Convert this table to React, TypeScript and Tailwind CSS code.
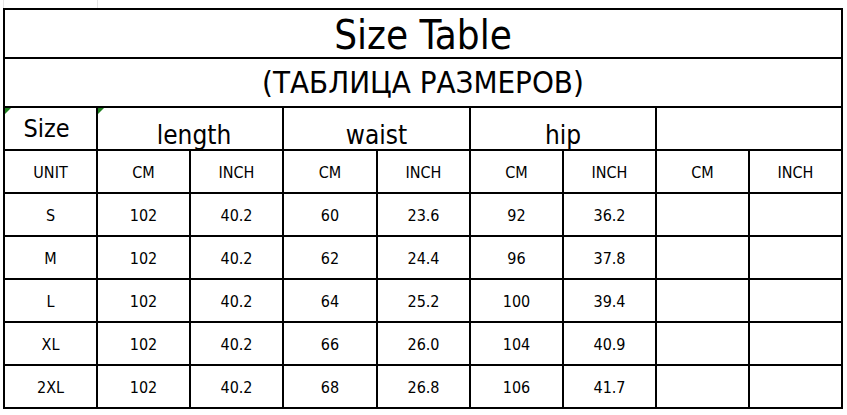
import React from "react";

const sizes = [
  ["S", "102", "40.2", "60", "23.6", "92", "36.2", "", ""],
  ["M", "102", "40.2", "62", "24.4", "96", "37.8", "", ""],
  ["L", "102", "40.2", "64", "25.2", "100", "39.4", "", ""],
  ["XL", "102", "40.2", "66", "26.0", "104", "40.9", "", ""],
  ["2XL", "102", "40.2", "68", "26.8", "106", "41.7", "", ""],
];

const units = ["UNIT", "CM", "INCH", "CM", "INCH", "CM", "INCH", "CM", "INCH"];

const cell = "border-r-2 border-b-2 border-black flex items-center justify-center";

function Flag() {
  // excel's little green corner marker
  return <div className="absolute top-0 left-0 w-0 h-0 border-t-[6px] border-t-[#1f7f1f] border-r-[6px] border-r-transparent" />;
}

export default function App() {
  return (
    <div className="w-[847px] h-[415px] bg-white text-black font-['DejaVu_Sans_Condensed','DejaVu_Sans',sans-serif] overflow-hidden">
      <div className="flex h-[8px]">
        <div className="ml-[3px] w-px bg-[#e4e4e4]" />
        <div className="ml-[93px] w-px bg-[#e4e4e4]" />
      </div>
      <div className="ml-[3px] w-fit grid grid-cols-[93px_93px_93px_94px_93px_93px_93px_93px_93px] grid-rows-[49px_49px_repeat(7,43px)] border-l-2 border-t-2 border-black">
        <div className={`${cell} col-span-9 pt-[2px] text-[40px] leading-none`}>Size Table</div>
        <div className={`${cell} col-span-9 text-[31px] leading-none`}>(ТАБЛИЦА РАЗМЕРОВ)</div>

        <div className={`${cell} relative text-[25px] leading-none pr-2`}>
          <Flag />
          Size
        </div>
        <div className={`${cell} relative col-span-2 !items-end pb-[1px] pl-2 text-[26px] leading-none`}>
          <Flag />
          length
        </div>
        <div className={`${cell} col-span-2 !items-end pb-[1px] text-[26px] leading-none`}>waist</div>
        <div className={`${cell} col-span-2 !items-end pb-[1px] text-[26px] leading-none`}>hip</div>
        <div className={`${cell} col-span-2`} />

        {units.map((u, i) => (
          <div key={i} className={`${cell} pt-[3px] text-[16px]`}>{u}</div>
        ))}

        {sizes.map((row) =>
          row.map((v, i) => (
            <div key={row[0] + i} className={`${cell} pt-[2px] text-[16px]`}>{v}</div>
          ))
        )}
      </div>
    </div>
  );
}
